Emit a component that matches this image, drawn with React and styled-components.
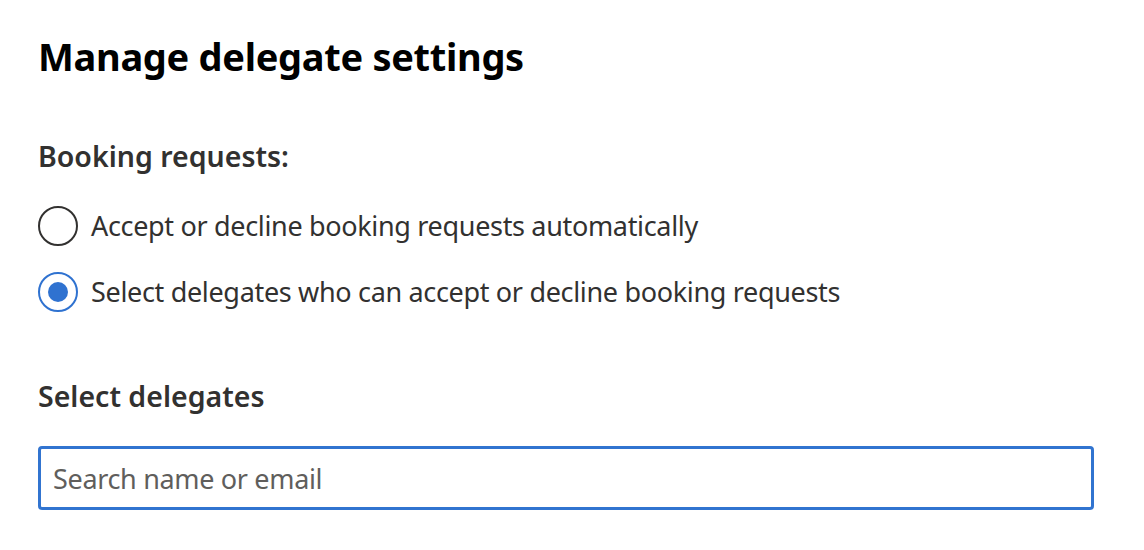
import React from "react";
import styled, { createGlobalStyle } from "styled-components";

const Global = createGlobalStyle`
  html, body { margin: 0; padding: 0; background: #ffffff; }
  body { font-family: "Noto Sans", "Open Sans", "Liberation Sans", sans-serif; }
`;

const Page = styled.div`
  width: 1144px;
  height: 550px;
  box-sizing: border-box;
  padding: 28px 50px 0 38px;
  display: flex;
  flex-direction: column;
`;

const Title = styled.h1`
  margin: 0;
  font-size: 38px;
  line-height: 56px;
  font-weight: 700;
  color: #000000;
  letter-spacing: -0.3px;
`;

const SectionLabel = styled.div`
  margin-top: ${(p) => p.$top}px;
  font-size: 28.5px;
  line-height: 40px;
  font-weight: 600;
  color: #323130;
`;

const RadioGroup = styled.div`
  display: flex;
  flex-direction: column;
  gap: 26px;
  margin-top: 30px;
`;

const RadioRow = styled.label`
  display: flex;
  align-items: center;
  gap: 13px;
  height: 40px;
  cursor: pointer;
`;

const Circle = styled.span`
  box-sizing: border-box;
  width: 40px;
  height: 40px;
  border-radius: 50%;
  border: 2px solid ${(p) => (p.$checked ? "#2f72d0" : "#323130")};
  display: flex;
  align-items: center;
  justify-content: center;
  flex-shrink: 0;
`;

const Dot = styled.span`
  width: 20px;
  height: 20px;
  border-radius: 50%;
  background: #2f72d0;
`;

const RadioText = styled.span`
  font-size: 27px;
  line-height: 40px;
  letter-spacing: -0.33px;
  color: #323130;
`;

const SearchBox = styled.div`
  margin-top: 30px;
  box-sizing: border-box;
  height: 64px;
  border: 3px solid #3174d0;
  border-radius: 4px;
  display: flex;
  align-items: center;
  padding: 0 12px;
`;

const SearchInput = styled.input`
  border: none;
  outline: none;
  width: 100%;
  font-family: inherit;
  font-size: 27px;
  letter-spacing: -0.33px;
  color: #323130;
  background: transparent;
  padding: 0;
  &::placeholder { color: #605e5c; }
`;

function Radio({ checked, children }) {
  return (
    <RadioRow>
      <Circle $checked={checked}>{checked && <Dot />}</Circle>
      <RadioText>{children}</RadioText>
    </RadioRow>
  );
}

export default function App() {
  return (
    <Page>
      <Global />
      <Title>Manage delegate settings</Title>
      <SectionLabel $top={52}>Booking requests:</SectionLabel>
      <RadioGroup>
        <Radio>Accept or decline booking requests automatically</Radio>
        <Radio checked>Select delegates who can accept or decline booking requests</Radio>
      </RadioGroup>
      <SectionLabel $top={64}>Select delegates</SectionLabel>
      <SearchBox>
        <SearchInput placeholder="Search name or email" />
      </SearchBox>
    </Page>
  );
}
